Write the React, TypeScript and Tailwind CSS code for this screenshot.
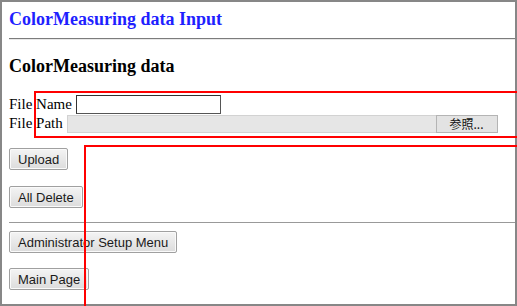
const serif = { fontFamily: '"Liberation Serif", "Times New Roman", serif' }

function WinButton({ label }: { label: string }) {
  return (
    <button
      type="button"
      className="h-[22px] px-[8px] border border-[#a0a0a0] rounded-[2px] bg-gradient-to-b from-[#f4f4f4] to-[#dcdcdc] text-[13px] leading-none text-[#1a1a1a] font-['Liberation_Sans',Arial,sans-serif] shadow-[inset_0_0_0_1px_#fafafa]"
    >
      {label}
    </button>
  )
}

export default function App() {
  return (
    <div className="relative w-[517px] h-[306px] overflow-hidden bg-white">
      <div className="h-full border-2 border-[#878787] pl-[7px] pt-[7px]" style={serif}>
        <h1 className="text-[18px] leading-[21px] font-bold text-[#1f1fff]">
          ColorMeasuring data Input
        </h1>
        <div className="mt-[8px] border-t border-[#7c7c7c] h-[2px] bg-[#e8e8e8]" />

        <h2 className="mt-[16px] text-[18px] leading-[21px] font-bold text-black">
          ColorMeasuring data
        </h2>

        <div className="mt-[18px] text-[15px] text-black">
          <div className="flex items-center h-[19px]">
            <span>File Name&nbsp;</span>
            <input
              type="text"
              className="w-[145px] h-[19px] border border-[#555] border-t-[#333] border-l-[#333] bg-white outline-none"
            />
          </div>
          <div className="flex items-center h-[19px]">
            <span>File Path&nbsp;</span>
            <div className="flex items-center h-[19px]">
              <div className="w-[370px] h-[18px] bg-[#e6e6e6] border border-[#d2d2d2]" />
              <div className="w-[62px] h-[18px] -ml-px flex items-center justify-center bg-[#e3e3e3] border border-[#b4b4b4] text-[12px] text-[#111] font-['Noto_Sans_CJK_JP',sans-serif]">
                参照...
              </div>
            </div>
          </div>
        </div>

        <div className="mt-[15px] flex">
          <WinButton label="Upload" />
        </div>
        <div className="mt-[16px] flex">
          <WinButton label="All Delete" />
        </div>

        <div className="mt-[14px] border-t border-[#999] h-[1px] bg-[#d4d4d4]" />

        <div className="mt-[8px] flex">
          <WinButton label="Administrator Setup Menu" />
        </div>
        <div className="mt-[15px] flex">
          <WinButton label="Main Page" />
        </div>
      </div>

      <div className="absolute left-[34px] top-[91px] w-[500px] h-[47px] border-2 border-[#ff0000] pointer-events-none" />
      <div className="absolute left-[84px] top-[145px] w-[500px] h-[200px] border-2 border-[#ff0000] pointer-events-none" />
    </div>
  )
}
